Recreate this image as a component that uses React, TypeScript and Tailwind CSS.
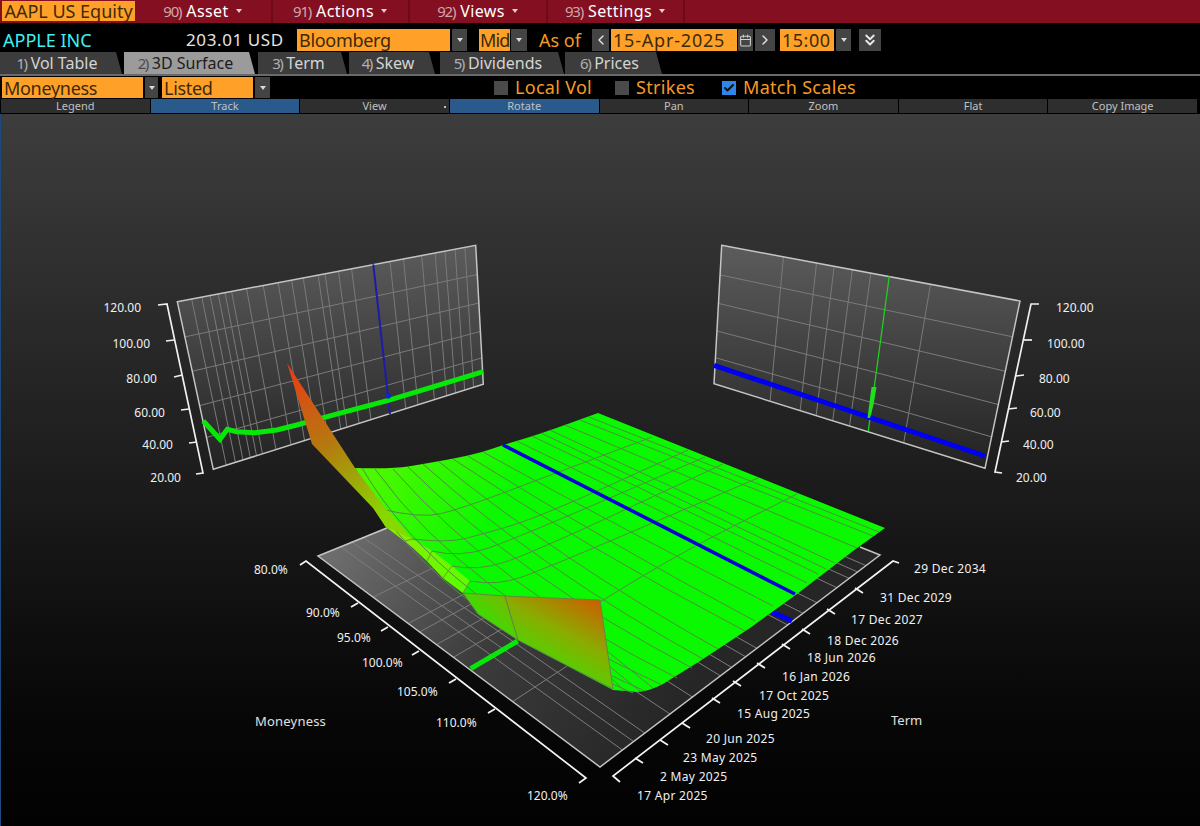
import { Calendar, Check, ChevronLeft, ChevronRight, ChevronsDown } from "lucide-react";

type Pt = [number, number];

const lerp = (a: Pt, b: Pt, t: number): Pt => [a[0] + (b[0] - a[0]) * t, a[1] + (b[1] - a[1]) * t];

// quadratic smoothing through a list of points
const smooth = (pts: Pt[]) => {
  let d = `M${pts[0][0]} ${pts[0][1]}`;
  for (let i = 1; i < pts.length - 1; i++) {
    const m = lerp(pts[i], pts[i + 1], 0.5);
    d += ` Q${pts[i][0]} ${pts[i][1]} ${m[0]} ${m[1]}`;
  }
  const last = pts[pts.length - 1];
  return d + ` L${last[0]} ${last[1]}`;
};

const poly = (pts: Pt[]) => pts.map((p) => p.join(",")).join(" ");

const menus = [
  { num: "90)", label: "Asset" },
  { num: "91)", label: "Actions" },
  { num: "92)", label: "Views" },
  { num: "93)", label: "Settings" },
];

const tabs = [
  { num: "1)", label: "Vol Table", w: "w-[122px]", ml: "ml-0" },
  { num: "2)", label: "3D Surface", w: "w-[131px]", ml: "ml-[2px]", active: true },
  { num: "3)", label: "Term", w: "w-[89px]", ml: "ml-[3px]" },
  { num: "4)", label: "Skew", w: "w-[86px]", ml: "ml-[2px]" },
  { num: "5)", label: "Dividends", w: "w-[124px]", ml: "ml-[5px]" },
  { num: "6)", label: "Prices", w: "w-[97px]", ml: "ml-[1px]" },
];

const tools = ["Legend", "Track", "View", "Rotate", "Pan", "Zoom", "Flat", "Copy Image"];

const Caret = () => (
  <span className="w-0 h-0 border-l-[3px] border-r-[3px] border-t-[4px] border-l-transparent border-r-transparent border-t-[#d8d8d8]" />
);

const DropBtn = ({ w = "w-[15px]", ml = "" }: { w?: string; ml?: string }) => (
  <span className={`${w} ${ml} bg-[#444444] flex items-center justify-center shrink-0`}>
    <Caret />
  </span>
);

const Orange = ({ children, w, ml = "", track = "tracking-[-0.3px]", pad = "pl-[2px]" }: { children: string; w: string; ml?: string; track?: string; pad?: string }) => (
  <span className={`${w} ${ml} ${track} ${pad} bg-[#ffa028] text-[#3c2a08] text-[18px] leading-[22px] whitespace-nowrap shrink-0`}>
    {children}
  </span>
);

const CheckField = ({ label, checked, cls }: { label: string; checked?: boolean; cls: string }) => (
  <span className={`flex items-center ${cls}`}>
    <span className={`w-[14px] h-[14px] flex items-center justify-center ${checked ? "bg-[#2f86ea]" : "bg-[#4a4a4a]"}`}>
      {checked && <Check size={12} strokeWidth={4} color="#101010" />}
    </span>
    <span className="ml-[7px] text-[#f59a23] text-[18px] leading-[21px] tracking-[0.3px] whitespace-nowrap">{label}</span>
  </span>
);

// back wall with its grid
const Wall = ({ c, ts, ss, gid }: { c: [Pt, Pt, Pt, Pt]; ts: number[]; ss: number[]; gid: string }) => {
  const [tl, tr, br, bl] = c;
  return (
    <g>
      <polygon points={poly(c)} fill={`url(#${gid})`} />
      {ts.map((t) => {
        const a = lerp(tl, tr, t);
        const b = lerp(bl, br, t);
        return <line key={t} x1={a[0]} y1={a[1]} x2={b[0]} y2={b[1]} stroke="#7a7a7a" strokeWidth="1" />;
      })}
      {ss.map((s) => {
        const a = lerp(tl, bl, s);
        const b = lerp(tr, br, s);
        return <line key={s} x1={a[0]} y1={a[1]} x2={b[0]} y2={b[1]} stroke="#7a7a7a" strokeWidth="1" />;
      })}
      <polygon points={poly(c)} fill="none" stroke="#c4c4c4" strokeWidth="1.5" />
    </g>
  );
};

const leftTicks: [Pt, Pt][] = [
  [[158, 304], [167, 303]],
  [[166, 340], [174, 339]],
  [[174, 376], [182, 374]],
  [[181, 409], [189, 408]],
  [[189, 442], [197, 441]],
  [[196, 473], [203, 472]],
];
const rightTicks: [Pt, Pt][] = [
  [[1031, 303], [1039, 303]],
  [[1023, 339], [1032, 339]],
  [[1016, 375], [1024, 374]],
  [[1008, 408], [1017, 407]],
  [[1001, 441], [1009, 440]],
  [[995, 471], [1002, 472]],
];

const volLabels = ["120.00", "100.00", "80.00", "60.00", "40.00", "20.00"];
const volY = [311, 347, 382, 416, 448, 481];
const volLeftEnd = [141, 150, 157, 165, 173, 181];
const volRightStart = [1056, 1047, 1039, 1030, 1023, 1016];

const moneyTicks: Pt[] = [
  [306, 560], [358, 602], [388, 626], [419, 650], [456, 678], [495, 708], [586, 777],
];
const moneyLabels: [string, number, number][] = [
  ["80.0%", 254, 573], ["90.0%", 306, 616], ["95.0%", 337, 641], ["100.0%", 362, 666],
  ["105.0%", 397, 695], ["110.0%", 436, 726], ["120.0%", 527, 799],
];

const termTicks: Pt[] = [
  [893, 560], [855, 587], [827, 608], [802, 628], [782, 643], [757, 662],
  [733, 680], [712, 697], [682, 722], [660, 739], [635, 757], [613, 775],
];
const termLabels: [string, number, number][] = [
  ["29 Dec 2034", 914, 572], ["31 Dec 2029", 880, 601], ["17 Dec 2027", 851, 623],
  ["18 Dec 2026", 827, 644], ["18 Jun 2026", 807, 661], ["16 Jan 2026", 782, 680],
  ["17 Oct 2025", 759, 699], ["15 Aug 2025", 737, 717], ["20 Jun 2025", 706, 742],
  ["23 May 2025", 683, 761], ["2 May 2025", 660, 780], ["17 Apr 2025", 637, 799],
];

// floor corners
const L: Pt = [318, 555];
const F: Pt = [600, 766];
const R: Pt = [880, 554];
const Bk: Pt = [598, 437];
const floorTerm = [0.08, 0.12, 0.16, 0.25, 0.33, 0.43, 0.47, 0.52, 0.56, 0.67, 0.725, 0.775, 0.846, 0.89, 0.92, 0.95];
const floorMoney = [0.195, 0.32, 0.36, 0.42, 0.48, 0.69];

// surface lines along term, start on back edge, end on front edge, w = bend
const termLines: { b: Pt; e: Pt; w: number }[] = [
  { b: [355, 467], e: [633, 692], w: 1 },
  { b: [362, 467], e: [645, 690], w: 0.9 },
  { b: [375, 468], e: [662, 684], w: 0.75 },
  { b: [393, 468], e: [677, 677], w: 0.55 },
  { b: [408, 466], e: [692, 667], w: 0.42 },
  { b: [423, 463], e: [703, 658], w: 0.32 },
  { b: [438, 460], e: [718, 648], w: 0.24 },
  { b: [453, 458], e: [745, 630], w: 0.16 },
  { b: [468, 455], e: [755, 620], w: 0.1 },
  { b: [483, 451], e: [773, 605], w: 0.05 },
  { b: [517, 440], e: [807, 582], w: 0 },
  { b: [532, 435], e: [818, 573], w: 0 },
  { b: [541, 432], e: [826, 568], w: 0 },
  { b: [550, 429], e: [835, 562], w: 0 },
  { b: [565, 424], e: [857, 547], w: 0 },
  { b: [580, 419], e: [873, 535], w: 0 },
  { b: [589, 416], e: [879, 531], w: 0 },
  // short ones that come out from behind the wing
  { b: [607, 650], e: [653, 687], w: 0 },
  { b: [609, 665], e: [640, 690], w: 0 },
  { b: [611, 677], e: [625, 690], w: 0 },
];

const moneyLines: Pt[][] = [
  [[377, 507], [420, 518], [463, 507], [540, 478], [652, 436]],
  [[412, 538], [447, 542], [483, 533], [537, 517], [688, 449]],
  [[432, 550], [460, 557], [517, 537], [705, 456]],
  [[452, 565], [477, 570], [530, 553], [723, 463]],
  [[470, 580], [497, 585], [547, 567], [758, 477]],
  [[600, 601], [670, 557], [797, 493]],
];

const backEdge: Pt[] = [
  [355, 467], [393, 468], [423, 463], [457, 457], [483, 451], [503, 444], [540, 433], [598, 412],
];
const surfaceOutline =
  smooth(backEdge) +
  " L885 527 L853 550 L797 593 L750 627 L700 660 L663 683 Q650 690 637 691 L613 689 L518 639 L478 613 L463 592 L443 577 L427 560 L412 546 L385 525 Z";

const Chart = () => (
  <svg viewBox="0 113 1200 713" width="1200" height="713" className="block" fontFamily="'Noto Sans', sans-serif">
    <defs>
      <linearGradient id="wallA" x1="0" y1="0" x2="0" y2="1">
        <stop offset="0" stopColor="#5c5c5c" />
        <stop offset="0.6" stopColor="#3a3a3a" />
        <stop offset="1" stopColor="#222222" />
      </linearGradient>
      <linearGradient id="floorG" gradientUnits="userSpaceOnUse" x1="320" y1="540" x2="640" y2="760">
        <stop offset="0" stopColor="#727272" />
        <stop offset="0.5" stopColor="#3c3c3c" />
        <stop offset="1" stopColor="#262626" />
      </linearGradient>
      <linearGradient id="surfG" gradientUnits="userSpaceOnUse" x1="370" y1="470" x2="480" y2="540">
        <stop offset="0" stopColor="#50f800" />
        <stop offset="1" stopColor="#0af800" />
      </linearGradient>
      <linearGradient id="wingL" gradientUnits="userSpaceOnUse" x1="290" y1="365" x2="378" y2="518">
        <stop offset="0" stopColor="#e83c14" />
        <stop offset="0.5" stopColor="#b47a10" />
        <stop offset="1" stopColor="#88d800" />
      </linearGradient>
      <linearGradient id="wingA" gradientUnits="userSpaceOnUse" x1="500" y1="592" x2="470" y2="625">
        <stop offset="0" stopColor="#78b800" />
        <stop offset="1" stopColor="#20ee00" />
      </linearGradient>
      <linearGradient id="wingB" gradientUnits="userSpaceOnUse" x1="600" y1="597" x2="550" y2="690">
        <stop offset="0" stopColor="#d05a00" />
        <stop offset="0.45" stopColor="#8aac00" />
        <stop offset="1" stopColor="#28ee00" />
      </linearGradient>
      <linearGradient id="strip" gradientUnits="userSpaceOnUse" x1="380" y1="510" x2="470" y2="590">
        <stop offset="0" stopColor="#98e800" />
        <stop offset="1" stopColor="#58ff00" />
      </linearGradient>
    </defs>

    <Wall
      c={[[177.3, 300.7], [475.7, 244.3], [483.3, 383.3], [213.3, 468.3]]}
      ts={[0.048, 0.082, 0.11, 0.137, 0.16, 0.182, 0.232, 0.288, 0.338, 0.383, 0.422, 0.472, 0.495, 0.54, 0.584, 0.713, 0.758, 0.819, 0.864, 0.897, 0.931, 0.964]}
      ss={[0.21, 0.415, 0.62, 0.81]}
      gid="wallA"
    />
    <line x1="373.3" y1="263.3" x2="390" y2="413.3" stroke="#1c1ca8" strokeWidth="2" />
    <polyline
      points="203.3,420 220,438.3 227.3,428.3 236.7,430.7 255,431.7 276.7,429 296.7,424 338.3,412.7 388.3,399.3 483.3,370.7"
      fill="none"
      stroke="#08e808"
      strokeWidth="5"
    />
    <circle cx="388.3" cy="395" r="2.6" fill="#1420d8" />

    <Wall
      c={[[721.7, 244.3], [1020, 300], [985, 467.3], [714, 382.7]]}
      ts={[0.207, 0.318, 0.377, 0.438, 0.5, 0.7]}
      ss={[0.214, 0.42, 0.619, 0.812]}
      gid="wallA"
    />
    <line x1="889.3" y1="275" x2="868.3" y2="430" stroke="#1fd01f" strokeWidth="1.3" />
    <line x1="714" y1="364.3" x2="985" y2="455" stroke="#0000ee" strokeWidth="5" />
    <polygon points="871.5,386 876.5,386 873.5,404 870,417 867.5,417" fill="#1fe01f" />

    {/* vol axes */}
    <path d="M158 304 L167 303 L203 472 L196 473" fill="none" stroke="#f0f0f0" strokeWidth="1.7" />
    <path d="M1039 303 L1031 303 L995 471 L1002 472" fill="none" stroke="#f0f0f0" strokeWidth="1.7" />
    {leftTicks.slice(1, 5).map(([a, b], i) => (
      <line key={i} x1={a[0]} y1={a[1]} x2={b[0]} y2={b[1]} stroke="#f0f0f0" strokeWidth="1.7" />
    ))}
    {rightTicks.slice(1, 5).map(([a, b], i) => (
      <line key={i} x1={a[0]} y1={a[1]} x2={b[0]} y2={b[1]} stroke="#f0f0f0" strokeWidth="1.7" />
    ))}
    {volLabels.map((v, i) => (
      <text key={v} x={volLeftEnd[i]} y={volY[i]} textAnchor="end" fontSize="12" fill="#f0f0f0">
        {v}
      </text>
    ))}
    {volLabels.map((v, i) => (
      <text key={v} x={volRightStart[i]} y={volY[i]} fontSize="12" fill="#f0f0f0">
        {v}
      </text>
    ))}

    {/* floor */}
    <polygon points={poly([L, F, R, Bk])} fill="url(#floorG)" />
    {floorTerm.map((v) => {
      const a = lerp(L, Bk, v);
      const b = lerp(F, R, v);
      return <line key={v} x1={a[0]} y1={a[1]} x2={b[0]} y2={b[1]} stroke="#7c7c7c" strokeWidth="1" />;
    })}
    {floorMoney.map((u) => {
      const a = lerp(L, F, u);
      const b = lerp(Bk, R, u);
      return <line key={u} x1={a[0]} y1={a[1]} x2={b[0]} y2={b[1]} stroke="#7c7c7c" strokeWidth="1" />;
    })}
    <polyline points={poly([[387, 527], L, F, R, [860, 546]])} fill="none" stroke="#c4c4c4" strokeWidth="1.5" />
    <line x1="470.7" y1="667.7" x2="517.7" y2="640" stroke="#08e808" strokeWidth="5" />
    <line x1="772" y1="611" x2="792" y2="620" stroke="#0000ee" strokeWidth="5" />

    {/* surface */}
    <path d={surfaceOutline} fill="url(#surfG)" />
    <polygon
      points={poly([[385, 507], [412, 538], [432, 550], [452, 565], [470, 580], [463, 592], [443, 577], [427, 560], [412, 546], [385, 525]])}
      fill="url(#strip)"
    />
    {termLines.map((l, i) => {
      const mid = lerp(l.b, l.e, 0.5);
      const cx = mid[0] - 70 * l.w;
      const cy = mid[1] + 25 * l.w;
      return (
        <path
          key={i}
          d={`M${l.b[0]} ${l.b[1]} Q${cx} ${cy} ${l.e[0]} ${l.e[1]}`}
          fill="none"
          stroke="#4f9040"
          strokeWidth="1"
        />
      );
    })}
    {moneyLines.map((m, i) => (
      <path key={i} d={smooth(m)} fill="none" stroke="#4f9040" strokeWidth="1" />
    ))}
    <path d="M412 538 L405 540 M432 550 L427 560 M452 565 L443 577 M470 580 L463 592" fill="none" stroke="#6a9a30" strokeWidth="1" />
    <line x1="503" y1="444" x2="795" y2="593" stroke="#0a00d8" strokeWidth="3.5" />
    <polygon
      points={poly([[287, 362], [355, 467], [385, 507], [412, 538], [385, 525], [373, 507], [312, 443]])}
      fill="url(#wingL)"
    />
    <polygon points={poly([[463, 592], [505, 595], [518, 639], [478, 613]])} fill="url(#wingA)" stroke="#5f8a44" />
    <polygon points={poly([[505, 595], [600, 599], [613, 688], [518, 639]])} fill="url(#wingB)" stroke="#5f8a44" />

    {/* moneyness axis */}
    <path d="M300 564 L306 560 L586 777 L579 782" fill="none" stroke="#f4f4f4" strokeWidth="1.7" />
    {moneyTicks.slice(1, 6).map((p, i) => (
      <line key={i} x1={p[0]} y1={p[1]} x2={p[0] - 7} y2={p[1] + 4} stroke="#f4f4f4" strokeWidth="1.7" />
    ))}
    {moneyLabels.map(([t, x, y]) => (
      <text key={t} x={x} y={y} fontSize="12" fill="#f0f0f0">
        {t}
      </text>
    ))}
    <text x="255" y="725" fontSize="13" letterSpacing="0.2" fill="#e0e0e0">
      Moneyness
    </text>

    {/* term axis */}
    <polyline points="899,562 893,560 613,775 620,781" fill="none" stroke="#f4f4f4" strokeWidth="1.7" />
    {termTicks.slice(1, 11).map((p, i) => (
      <line key={i} x1={p[0]} y1={p[1]} x2={p[0] + 8} y2={p[1] + 5} stroke="#f4f4f4" strokeWidth="1.7" />
    ))}
    {termLabels.map(([t, x, y]) => (
      <text key={t} x={x} y={y} fontSize="12" letterSpacing="0.3" fill="#f0f0f0">
        {t}
      </text>
    ))}
    <text x="891" y="724" fontSize="13" fill="#e0e0e0">
      Term
    </text>
  </svg>
);

const App = () => {
  return (
    <div className="w-[1200px] h-[826px] bg-black flex flex-col overflow-hidden font-['Noto_Sans',sans-serif]">
      {/* menu bar */}
      <div className="h-[23px] bg-[#840f20] flex shrink-0">
        <span className="w-[133px] ml-[2px] mt-[1px] h-[20px] bg-[#ffa028] text-[#3c2a08] text-[18px] leading-[20px] text-center whitespace-nowrap">
          AAPL US Equity
        </span>
        {menus.map((m) => (
          <div key={m.num} className="w-[138px] ml-[-0.5px] h-full pb-px border-r-2 border-[#6c0a18] flex items-center justify-center gap-[5px]">
            <span className="text-[#c9a8ac] text-[15px] leading-[22px] tracking-[-1.2px]">{m.num}</span>
            <span className="text-white text-[16px] leading-[22px] tracking-[0.4px]">{m.label}</span>
            <span className="ml-[2px] w-0 h-0 border-l-[3px] border-r-[3px] border-t-[4px] border-l-transparent border-r-transparent border-t-[#e0d0d0]" />
          </div>
        ))}
      </div>

      {/* security row */}
      <div className="h-[22px] mt-[6px] flex items-stretch shrink-0">
        <span className="w-[183px] pl-[3px] text-[#3ff0f0] text-[18px] leading-[22px] whitespace-nowrap">APPLE INC</span>
        <span className="w-[114px] pl-[3px] text-[#e4e4e4] text-[17px] leading-[22px] tracking-[0.6px] whitespace-nowrap">203.01 USD</span>
        <Orange w="w-[153px]">Bloomberg</Orange>
        <DropBtn ml="ml-[2px]" />
        <Orange w="w-[31px]" ml="ml-[12px]" track="tracking-[-0.8px]" pad="pl-[1px]">Mid</Orange>
        <DropBtn w="w-[16px]" ml="ml-[1px]" />
        <span className="ml-[12px] w-[53px] text-[#f59a23] text-[18px] leading-[22px] whitespace-nowrap">As of</span>
        <span className="w-[17px] bg-[#444444] flex items-center justify-center"><ChevronLeft size={16} color="#e8e8e8" /></span>
        <Orange w="w-[126px]" ml="ml-[2px]" track="tracking-[0.8px]">15-Apr-2025</Orange>
        <span className="ml-[1px] w-[15px] bg-[#444444] flex items-center justify-center"><Calendar size={13} color="#d0d0d0" /></span>
        <span className="ml-[2px] w-[20px] bg-[#444444] flex items-center justify-center"><ChevronRight size={16} color="#e8e8e8" /></span>
        <Orange w="w-[54px]" ml="ml-[5px]" track="tracking-[0.5px]">15:00</Orange>
        <DropBtn ml="ml-[2px]" />
        <span className="ml-[8px] w-[22px] bg-[#444444] flex items-center justify-center"><ChevronsDown size={18} strokeWidth={2.5} color="#e8e8e8" /></span>
      </div>

      {/* tabs */}
      <div className="h-[22px] mt-[1px] flex shrink-0">
        {tabs.map((t) => (
          <div
            key={t.num}
            className={`${t.w} ${t.ml} h-full pr-[8px] flex items-center justify-center gap-[4px] whitespace-nowrap [clip-path:polygon(0_0,calc(100%-6px)_0,100%_100%,0_100%)] ${t.active ? "bg-[#9b9b9b] text-[#1c1c1c]" : "bg-[#3c3c3c] text-[#d4d4d4]"}`}
          >
            <span className={`text-[15px] leading-[22px] tracking-[-1.5px] ${t.active ? "text-[#4c4c4c]" : "text-[#b0b0b0]"}`}>{t.num}</span>
            <span className="text-[16px] leading-[22px]">{t.label}</span>
          </div>
        ))}
      </div>
      <div className="h-[2px] bg-[#6a6a6a] shrink-0" />

      {/* options row */}
      <div className="h-[21px] mt-[1px] flex items-stretch shrink-0">
        <Orange w="w-[141px]" ml="ml-[2px]">Moneyness</Orange>
        <DropBtn w="w-[13px]" ml="ml-[2px]" />
        <Orange w="w-[91px]" ml="ml-[4px]">Listed</Orange>
        <DropBtn ml="ml-[2px]" />
        <CheckField label="Local Vol" cls="ml-[224px]" />
        <CheckField label="Strikes" cls="ml-[23px]" />
        <CheckField label="Match Scales" checked cls="ml-[27px]" />
      </div>

      {/* chart toolbar */}
      <div className="h-[14px] mt-[1px] grid grid-cols-8 gap-px pl-px pr-[3px] shrink-0">
        {tools.map((t) => (
          <div
            key={t}
            className={`relative flex items-center justify-center pb-px text-[11px] leading-[13px] text-[#c0c0c0] ${t === "Track" || t === "Rotate" ? "bg-[#2a5a8c]" : "bg-[#2e2e2e]"}`}
          >
            {t}
            {t === "View" && <span className="absolute right-[3px] top-[7px] w-[2px] h-[2px] bg-[#c0c0c0]" />}
          </div>
        ))}
      </div>

      {/* chart */}
      <div className="flex-1 min-h-0 mt-px bg-linear-to-b from-[#3d3d3d] via-[#1d1d1d] via-50% to-[#020202] border-l border-[#1d4a7a]">
        <div className="ml-[-1px]">
          <Chart />
        </div>
      </div>
    </div>
  );
};

export default App;
